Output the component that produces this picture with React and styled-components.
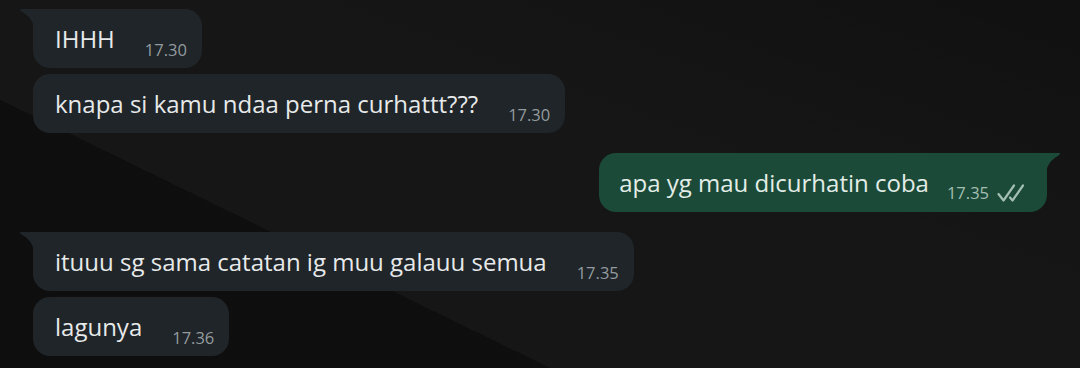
import styled, { createGlobalStyle } from "styled-components";

const GlobalStyle = createGlobalStyle`
  html, body {
    margin: 0;
    padding: 0;
    background: #131313;
  }
  body {
    font-family: "Open Sans", "Noto Sans", sans-serif;
  }
`;

const messages = [
  { text: "IHHH", time: "17.30", tail: true },
  { text: "knapa si kamu ndaa perna curhattt???", time: "17.30" },
  { text: "apa yg mau dicurhatin coba", time: "17.35", out: true, tail: true, read: true },
  { text: "ituuu sg sama catatan ig muu galauu semua", time: "17.35", tail: true },
  { text: "lagunya", time: "17.36" },
];

const Chat = styled.div`
  width: 1080px;
  height: 368px;
  box-sizing: border-box;
  padding: 9px 20px 0 20px;
  display: flex;
  flex-direction: column;
  gap: 6px;
  overflow: hidden;
  background:
    linear-gradient(206deg, transparent 70%, rgba(0, 0, 0, 0.35) 70%),
    linear-gradient(200deg, rgba(0, 0, 0, 0.25) 0%, transparent 40%),
    #161616;
`;

const Row = styled.div`
  display: flex;
  justify-content: ${(p) => (p.$out ? "flex-end" : "flex-start")};
  margin-top: ${(p) => (p.$gap ? "14px" : "0")};
`;

const Bubble = styled.div`
  position: relative;
  display: flex;
  align-items: flex-end;
  gap: ${(p) => (p.$out ? "18px" : "30px")};
  height: 59px;
  box-sizing: border-box;
  margin: ${(p) => (p.$out ? "0 13px 0 0" : "0 0 0 13px")};
  padding: ${(p) => (p.$out ? "0 18px 0 20px" : "0 15px 0 22px")};
  background: ${(p) => (p.$out ? "#1b4a39" : "#1f2528")};
  border-radius: ${(p) =>
    p.$tail ? (p.$out ? "17px 0 17px 17px" : "0 17px 17px 17px") : "17px"};

  &::before {
    content: "";
    display: ${(p) => (p.$tail ? "block" : "none")};
    position: absolute;
    top: 0;
    ${(p) => (p.$out ? "right: -13px;" : "left: -13px;")}
    width: 13px;
    height: 15px;
    background: inherit;
    clip-path: ${(p) =>
      p.$out
        ? "path('M13 0 Q13 1.5 11.5 2.5 Q3 7 0 15 V0 Z')"
        : "path('M0 0 Q0 1.5 1.5 2.5 Q10 7 13 15 V0 Z')"};
  }
`;

const Text = styled.span`
  font-size: 24px;
  line-height: 1;
  color: ${(p) => (p.$out ? "#e2ede7" : "#e7e9ea")};
  padding-bottom: 17px;
  white-space: nowrap;
`;

const Meta = styled.span`
  display: flex;
  align-items: center;
  gap: 8px;
  padding-bottom: 10px;
  font-size: 16.5px;
  line-height: 1;
  color: ${(p) => (p.$out ? "#a3bfb1" : "#949b9f")};
  white-space: nowrap;
`;

const Ticks = ({ color }) => (
  <svg width="32" height="18" viewBox="0 0 32 18" fill="none">
    <path
      d="M1.5 10 L6.5 16.5 L17 1.5"
      stroke={color}
      strokeWidth="2.2"
      strokeLinecap="round"
      strokeLinejoin="round"
    />
    <path
      d="M13 13.5 L15.5 16.5 L26 1.5"
      stroke={color}
      strokeWidth="2.2"
      strokeLinecap="round"
      strokeLinejoin="round"
    />
  </svg>
);

export default function App() {
  return (
    <>
      <GlobalStyle />
      <Chat>
        {messages.map((m, i) => (
          <Row key={i} $out={m.out} $gap={i > 0 && m.tail}>
            <Bubble $out={m.out} $tail={m.tail}>
              <Text $out={m.out}>{m.text}</Text>
              <Meta $out={m.out}>
                {m.time}
                {m.read && <Ticks color="#a3bfb1" />}
              </Meta>
            </Bubble>
          </Row>
        ))}
      </Chat>
    </>
  );
}
